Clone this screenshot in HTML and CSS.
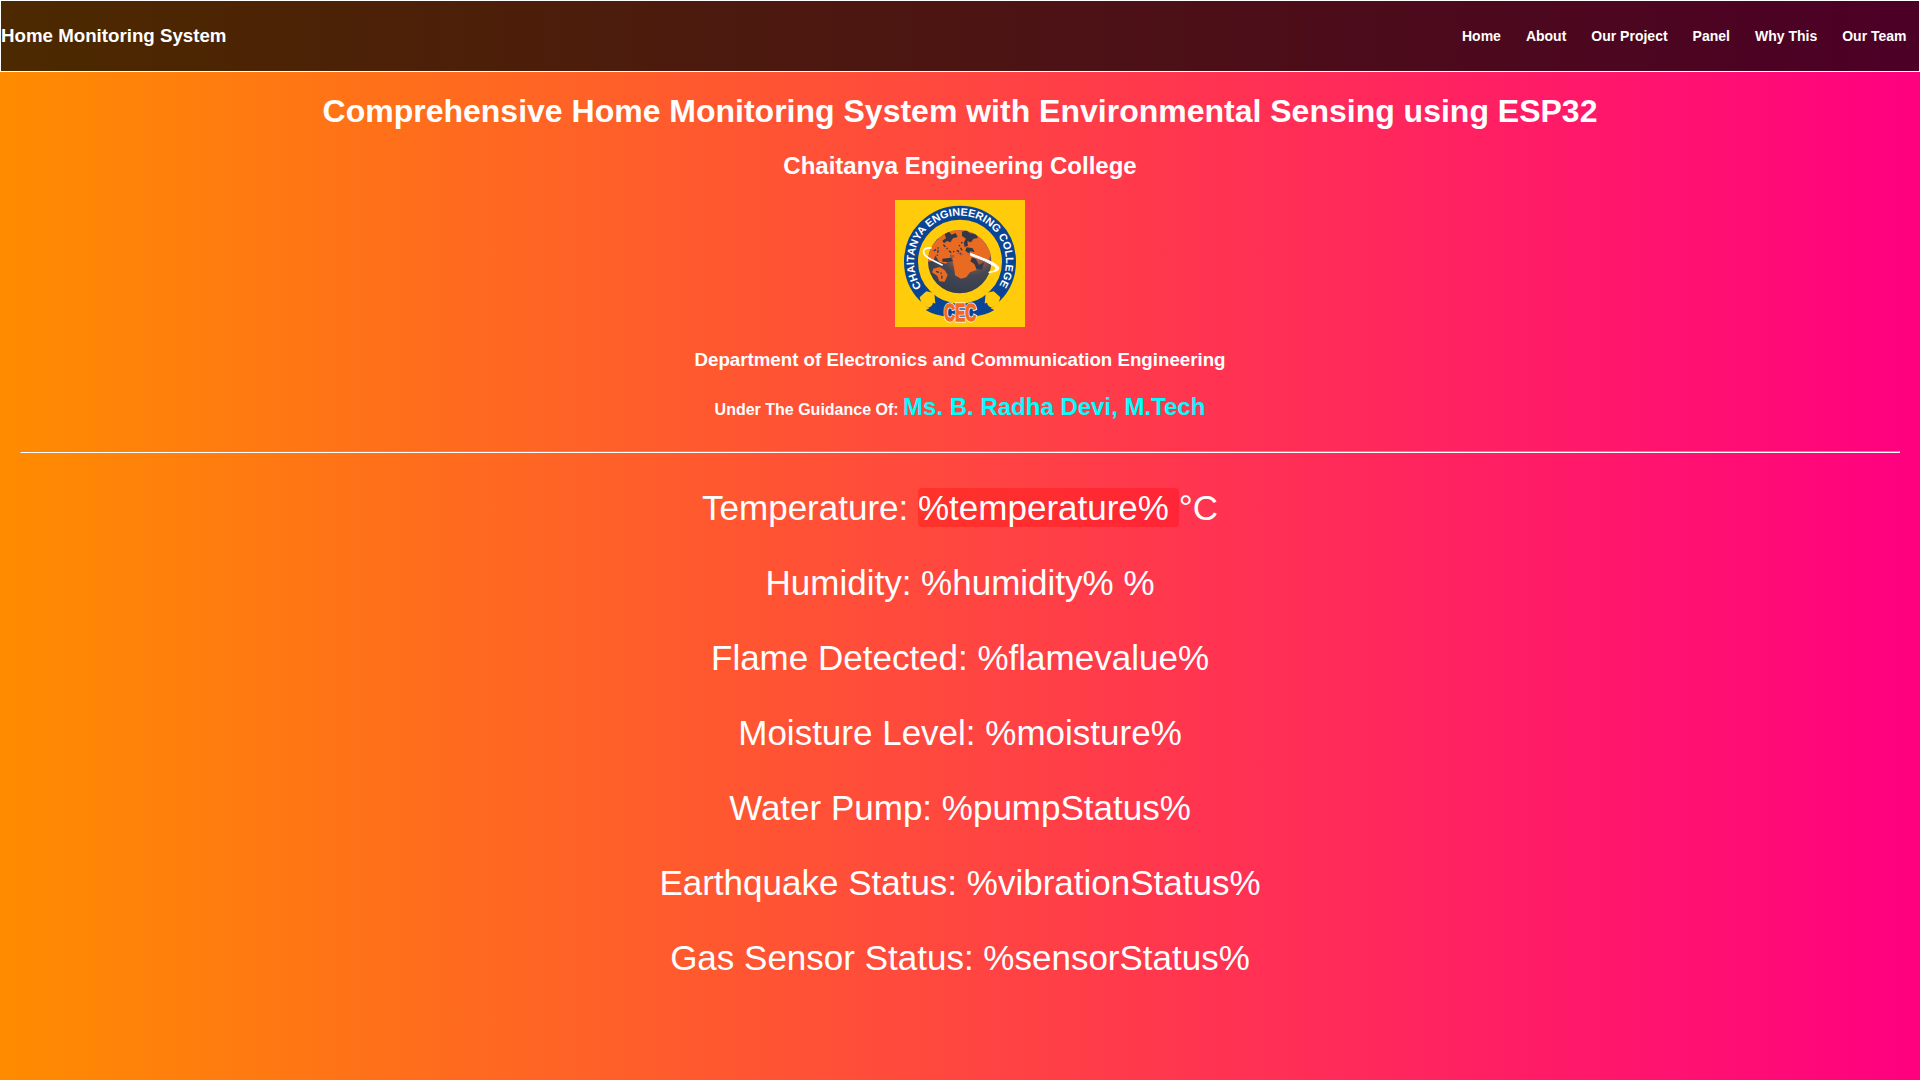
FILE: index.html
```html
<!DOCTYPE html>
<html lang="en">
<head>
<meta charset="utf-8">
<title>Home Monitoring System</title>
<link rel="stylesheet" href="styles.css">
</head>
<body>
<header class="navbar">
  <h3 class="brand">Home Monitoring System</h3>
  <nav class="nav-links">
    <a>Home</a><a>About</a><a>Our Project</a><a>Panel</a><a>Why This</a><a>Our Team</a>
  </nav>
</header>
<main class="content">
  <h1 class="title">Comprehensive Home Monitoring System with Environmental Sensing using ESP32</h1>
  <h2 class="college">Chaitanya Engineering College</h2>
  <svg class="logo" viewBox="30 30 390 381" preserveAspectRatio="none" role="img" aria-label="College logo">
    <defs>
      <path id="ring-line" d="M110 291A138 138 0 1 1 340 291"/>
      <radialGradient id="sea" cx=".65" cy=".2" r=".85"><stop offset="0" stop-color="#f47a3c"/><stop offset=".38" stop-color="#a75a48"/><stop offset=".62" stop-color="#434752"/><stop offset="1" stop-color="#343c4c"/></radialGradient>
      <clipPath id="globe"><circle cx="224" cy="215" r="95"/></clipPath>
      <text id="cec" class="cec-text" x="177" y="393" textLength="97" lengthAdjust="spacingAndGlyphs">CEC</text>
    </defs>
    <path fill="#ffcb0a" d="M30 30h390v381H30z"/>
    <circle cx="225" cy="215" r="147" fill="none" stroke="#0a4595" stroke-width="42"/>
    <path fill="#ffcb0a" d="M104 322l20-18 24 5 3 32-20 12-21-10zM346 322l-20-18-24 5-3 32 20 12 21-10z"/>
    <path fill="#0a4595" d="M144 338q35 14 81 14t81-14q3 15 22 22-30 20-103 24-73-4-103-24 19-7 22-22z"/>
    <circle cx="128" cy="325" r="18" fill="#ffcb0a"/><circle cx="322" cy="325" r="18" fill="#ffcb0a"/>
    <circle cx="224" cy="215" r="95" fill="url(#sea)"/>
    <g clip-path="url(#globe)">
      <path fill="#e96b22" d="M181 126l35-7 28 9 40 10 33 50-6 27-16-10-22-5-18-14-24 3-12-6-7 15-17-5 2 17-15 11-19-5-12-20-15-6-9-20 18-9zM202 205l15-14 13 8 8-13 12 10 19-4 3 12-2 14 4 22-19 7-11 15-16 4-18-10-2-19-4-17zM139 165l19-12 11 12-12 16-12 31-19 4zM145 236l19-5 15 9 9 15-9 20-16-1-6-16-16-11z"/>
      <path fill="#343846" d="M178 129l14-4 8 9 12-5 6 12-14 4-8 12-10-4-9 7-5-8 11-7zM231 125l14-4 10 9 18 1 6 13-13 2-8 11-11-3 2 13-10 4-3-13 7-12-12-8zM245 172l18 3 6 11-13-2-5 6-10-8zM172 206l26-3 6 10-15 3-17-1zM261 202l12 5 9 18 15-8-6 22-17-3-6-14-12-8z"/>
      <path fill="none" stroke="#343846" stroke-width="4" stroke-dasharray="9 5 4 7" d="M175 164l22 23 22-5 9 11M231 181l-8-14 9-11M146 183l15-10-5 28M153 244l17 6 1 17"/>
    </g>
    <path d="M140 174C111 172 105 190 137 208L173 226" fill="none" stroke="#fff" stroke-width="5"/>
    <path d="M257 190L307 210C342 224 351 238 331 244Q321 247 311 247Q342 241 329 229Q302 211 257 196z" fill="#fff" stroke="#fff" stroke-width="3"/>
    <text class="ring-text"><textPath href="#ring-line" textLength="590" lengthAdjust="spacingAndGlyphs">CHAITANYA ENGINEERING COLLEGE</textPath></text>
    <use href="#cec" class="cec-outline"/>
    <use href="#cec" class="cec-face"/>
  </svg>
  <h3 class="department">Department of Electronics and Communication Engineering</h3>
  <h4 class="guide">Under The Guidance Of: <span class="guide-name">Ms. B. Radha Devi, M.Tech</span></h4>
  <hr class="divider">
  <section class="readings">
    <p>Temperature: <span class="alert">%temperature% </span>°C</p>
    <p>Humidity: %humidity% %</p>
    <p>Flame Detected: %flamevalue%</p>
    <p>Moisture Level: %moisture%</p>
    <p>Water Pump: %pumpStatus%</p>
    <p>Earthquake Status: %vibrationStatus%</p>
    <p>Gas Sensor Status: %sensorStatus%</p>
  </section>
</main>
</body>
</html>
```
FILE: styles.css
```css
* { box-sizing: border-box; }
html, body { height: 100%; }
body {
  margin: 0;
  overflow: hidden;
  color: #fff;
  font-family: Arial, "Liberation Sans", sans-serif;
  background: linear-gradient(to right, #ff8c00, #ff0080);
}
.navbar {
  display: flex;
  align-items: center;
  justify-content: space-between;
  height: 72px;
  border: 1px solid #fff;
  background: rgba(0, 0, 0, .7);
}
.brand { margin: 0; font-size: 18.72px; }
.nav-links { display: flex; gap: 25px; padding: 0 12.5px 1px 0; font-size: 14px; font-weight: bold; }
.content { padding: 0 20px; text-align: center; }
.title { margin: 21px 0; font-size: 32px; line-height: 37px; }
.college { margin: 0 0 19px; font-size: 24px; line-height: 30px; }
.logo { display: block; width: 130px; height: 127px; margin: 0 auto; }
.department { margin: 22px 0 20px; font-size: 18.72px; line-height: 22px; }
.guide { margin: 0; font-size: 16px; line-height: 32px; }
.guide-name { color: #0ff; font-size: 24px; }
.divider { height: 2px; margin: 25px 0 35px; border: 1px solid; border-color: #9a9a9a #eee #fff #9a9a9a; }
.readings { font-size: 35px; line-height: 40px; }
.readings p { margin: 0 0 35px; }
.alert { border-radius: 4px; background: rgba(255, 0, 0, .3); }
.ring-text { fill: #fff; font-size: 32px; font-weight: bold; }
.cec-text { font-size: 70px; font-weight: bold; }
.cec-outline { fill: #fff; stroke: #fff; stroke-width: 9px; }
.cec-face { fill: #f26a21; stroke: #f26a21; stroke-width: 4px; }
```
